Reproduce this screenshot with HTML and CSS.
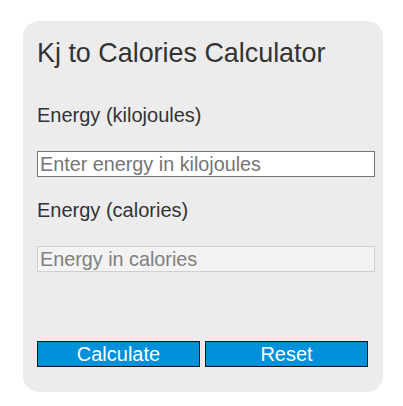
FILE: index.html
```html
<!DOCTYPE html>
<html lang="en">
<head>
<meta charset="utf-8">
<title>Kj to Calories Calculator</title>
<link rel="stylesheet" href="styles.css">
</head>
<body>
<div class="card">
  <h1 class="title">Kj to Calories Calculator</h1>
  <label class="label label-first" for="kj">Energy (kilojoules)</label>
  <input class="field" id="kj" type="text" placeholder="Enter energy in kilojoules">
  <label class="label label-second" for="cal">Energy (calories)</label>
  <input class="field field-readonly" id="cal" type="text" placeholder="Energy in calories" readonly>
  <div class="actions">
    <button class="btn" type="button">Calculate</button>
    <button class="btn" type="button">Reset</button>
  </div>
</div>
</body>
</html>
```
FILE: styles.css
```css
html, body {
  margin: 0;
  padding: 0;
  background: #ffffff;
}

body {
  font-family: "Liberation Sans", Arial, sans-serif;
  color: #333333;
}

.card {
  box-sizing: border-box;
  margin: 21px 0 0 23px;
  width: 360px;
  height: 371px;
  padding: 17px 8px 0 14px;
  background: #ececec;
  border-radius: 16px;
  display: flex;
  flex-direction: column;
}

.title {
  margin: 0;
  font-size: 26.9px;
  line-height: 30px;
  font-weight: normal;
  color: #333333;
}

.label {
  display: block;
  font-size: 20px;
  line-height: 23px;
  color: #333333;
}

.label-first {
  margin-top: 36px;
}

.label-second {
  margin-top: 22px;
}

.field {
  box-sizing: border-box;
  width: 338px;
  height: 26px;
  margin: 24px 0 0 0;
  padding: 0 2px;
  font-family: "Liberation Sans", Arial, sans-serif;
  font-size: 19.8px;
  color: #333333;
  background: #ffffff;
  border: 1px solid #767676;
  border-radius: 0;
  outline: none;
}

.field::placeholder {
  color: #757575;
  opacity: 1;
}

.field-readonly {
  background: #f3f3f3;
  border-color: #cfcfcf;
}

.field-readonly::placeholder {
  color: #808080;
}

.actions {
  display: grid;
  grid-template-columns: 163px 163px;
  column-gap: 5px;
  margin-top: 69px;
}

.btn {
  box-sizing: border-box;
  height: 26px;
  padding: 0;
  font-family: "Liberation Sans", Arial, sans-serif;
  font-size: 20px;
  line-height: 24px;
  color: #ffffff;
  background: #0091da;
  border: 1px solid #1a1a1a;
  border-radius: 0;
  cursor: pointer;
}
```
